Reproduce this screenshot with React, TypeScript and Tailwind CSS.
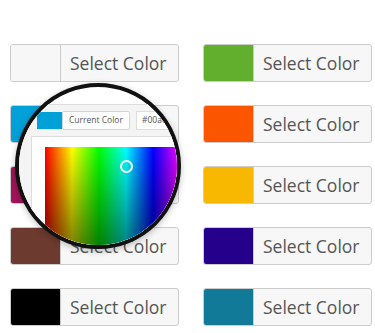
import React from 'react';

const left = ['#f7f7f7', '#00a0d9', '#a0145a', '#6d3a2f', '#000000'];
const right = ['#62ae2d', '#fb5500', '#f9b800', '#25008a', '#117a99'];

const ColorButton = ({ color }: { color: string }) => (
  <div className="flex h-[38px] w-[169px] overflow-hidden rounded-[3px] border border-[#cccccc] bg-[#f7f7f7]">
    <div className="w-[50px] shrink-0 border-r border-[#cccccc]" style={{ backgroundColor: color }} />
    <div className="flex flex-1 items-center whitespace-nowrap pl-[9px] text-[17.5px] text-[#555555]">Select Color</div>
  </div>
);

const Magnifier = () => (
  <div className="absolute left-[15px] top-[83px] h-[166px] w-[166px] overflow-hidden rounded-full border-4 border-[#111111] bg-white shadow-[0_2px_6px_rgba(0,0,0,0.25)]">
    <div className="pt-[17px]">
      <div className="h-[200px] border-t border-[#dddddd] bg-[#f4f4f4]">
        <div className="flex items-center pl-[18px] pt-[6px]">
          <div className="h-[17px] w-[25px] shrink-0 bg-[#00a0d9]" />
          <div className="flex h-[19px] w-[68px] shrink-0 items-center justify-center whitespace-nowrap rounded-[2px] border border-[#c7d7e2] bg-white text-[8.5px] text-[#555555]">
            Current Color
          </div>
          <div className="ml-[6px] flex h-[19px] w-[80px] shrink-0 items-center whitespace-nowrap border border-[#dddddd] bg-white pl-[5px] text-[8.5px] text-[#555555]">
            #00a0d9
          </div>
        </div>
        <div className="ml-[12px] mt-[6px] h-[160px] border border-[#dddddd] bg-white pl-[13px] pt-[10px]">
          <div className="relative h-[200px] w-[170px] bg-[linear-gradient(to_bottom,rgba(0,0,0,0),#000),linear-gradient(to_right,#f00_0px,#ff0_27px,#0f0_54px,#0ff_81px,#00f_108px,#f0f_135px,#f00_162px)]">
            <div className="absolute left-[75px] top-[13px] h-[13px] w-[13px] rounded-full border-2 border-white" />
          </div>
        </div>
      </div>
    </div>
  </div>
);

export default function App() {
  return (
    <div className="relative h-[333px] w-[375px] bg-white font-['Open_Sans',sans-serif]">
      <div className="flex gap-[24px] pl-[10px] pt-[44px]">
        <div className="flex flex-col gap-[23px]">
          {left.map((c, i) => (
            <ColorButton key={i} color={c} />
          ))}
        </div>
        <div className="flex flex-col gap-[23px]">
          {right.map((c, i) => (
            <ColorButton key={i} color={c} />
          ))}
        </div>
      </div>
      <Magnifier />
    </div>
  );
}
